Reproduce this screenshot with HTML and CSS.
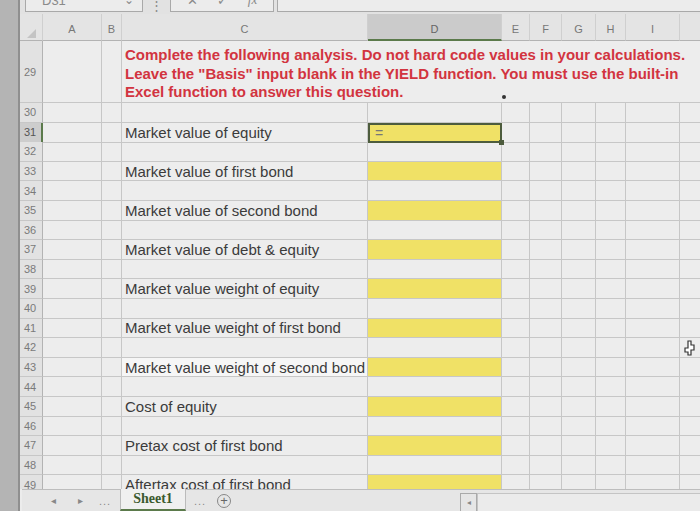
FILE: index.html
```html
<!DOCTYPE html>
<html lang="en">
<head>
    <meta charset="UTF-8">
    <meta name="viewport" content="width=device-width, initial-scale=1.0">
    <title>Sheet1</title>
    <link rel="stylesheet" href="styles.css">
</head>
<body>
    <div class="screen">
        <div class="edge"></div>
        <div class="app">
            <div class="formula-bar">
                <div class="name-box">D31<span class="caret">&#8964;</span></div>
                <span class="more">&#8942;</span>
                <div class="fx-box"><span>&#10005;</span><span>&#10003;</span><span class="fx">fx</span></div>
                <div class="formula-input"></div>
            </div>

            <div class="sheet" id="sheet">
                <div class="row col-heads">
                    <div class="cell head corner"><span class="tri"></span></div>
                    <div class="cell col">A</div>
                    <div class="cell col">B</div>
                    <div class="cell col">C</div>
                    <div class="cell col active">D</div>
                    <div class="cell col">E</div>
                    <div class="cell col">F</div>
                    <div class="cell col">G</div>
                    <div class="cell col">H</div>
                    <div class="cell col">I</div>
                    <div class="cell col"></div>
                </div>
                <div class="row tall">
                    <div class="cell head">29</div>
                    <div class="cell"></div>
                    <div class="cell"></div>
                    <div class="cell note">
                        Complete the following analysis. Do not hard code values in your calculations.<br>
                        Leave the "Basis" input blank in the YIELD function. You must use the built-in<br>
                        Excel function to answer this question.
                        <span class="dot"></span>
                    </div>
                </div>
            </div>

            <div class="tabs">
                <span class="nav">&#9666;</span>
                <span class="nav">&#9656;</span>
                <span class="ellipsis">...</span>
                <div class="tab">Sheet1</div>
                <span class="ellipsis">...</span>
                <span class="add">+</span>
                <div class="scroll">
                    <span class="scroll-btn">&#9666;</span>
                    <div class="track"></div>
                </div>
            </div>
        </div>

        <svg class="cursor" width="12" height="16" viewBox="0 0 12 16">
            <path d="M5 1h3v4h3v5h-3v5h-3v-3h-3v-4h3z" fill="#fff" stroke="#333" stroke-width="1.2"/>
        </svg>
    </div>

    <script>
        const items = {
            31: 'Market value of equity',
            33: 'Market value of first bond',
            35: 'Market value of second bond',
            37: 'Market value of debt & equity',
            39: 'Market value weight of equity',
            41: 'Market value weight of first bond',
            43: 'Market value weight of second bond',
            45: 'Cost of equity',
            47: 'Pretax cost of first bond',
            49: 'Aftertax cost of first bond'
        };

        const sheet = document.getElementById('sheet');

        for (let r = 30; r <= 49; r++) {
            const row = document.createElement('div');
            row.className = 'row';

            const label = items[r] || '';
            const cells = [
                { cls: 'head' + (r === 31 ? ' current' : ''), text: r },
                {}, {},
                { cls: 'label' + (r === 43 ? ' plain' : ''), text: label },
                { cls: label ? 'input' + (r === 31 ? ' selected' : '') : '', text: r === 31 ? '=' : '' },
                {}, {}, {}, {}, {}, {}
            ];

            cells.forEach(c => {
                const cell = document.createElement('div');
                cell.className = 'cell ' + (c.cls || '');
                cell.textContent = c.text || '';
                row.appendChild(cell);
            });

            sheet.appendChild(row);
        }
    </script>
</body>
</html>
```

FILE: styles.css
```css
body {
    margin: 0;
    font-family: "Liberation Sans", Arial, sans-serif;
    background: #ececec;
}

.screen {
    position: relative;
    display: flex;
    width: 700px;
    height: 511px;
    overflow: hidden;
    background: #ececec;
}

.edge {
    flex: none;
    width: 18px;
    background: #b4b4b4;
    border-right: 2px solid #8f8f8f;
}

.app {
    flex: 1;
    min-width: 0;
    display: flex;
    flex-direction: column;
}

/* formula bar, only its lower edge is in view */
.formula-bar {
    flex: none;
    height: 14px;
    display: flex;
    align-items: flex-end;
    overflow: hidden;
    background: #e2e2e2;
    color: #8a8a8a;
    font-size: 13px;
}

.name-box,
.fx-box,
.formula-input {
    height: 24px;
    margin-bottom: 2px;
    border: 1px solid #a9a9a9;
    background: #ececec;
    box-sizing: border-box;
    display: flex;
    align-items: center;
}

.name-box {
    width: 118px;
    margin-left: 5px;
    padding: 0 8px 0 16px;
    justify-content: space-between;
}

.caret {
    font-size: 12px;
}

.more {
    width: 27px;
    text-align: center;
    margin-bottom: 1px;
}

.fx-box {
    width: 104px;
    justify-content: space-around;
    padding: 0 6px;
}

.fx {
    font-style: italic;
    font-family: "Liberation Serif", serif;
}

.formula-input {
    flex: 1;
    margin-left: 3px;
    border-right: none;
}

/* grid */
.sheet {
    flex: 1;
    overflow: hidden;
    background: #ededed;
}

.row {
    display: grid;
    grid-template-columns: 23px 59px 20px 246px 134px 28px 32px 34px 30px 54px 40px;
    height: 19.6px;
}

.cell {
    border-right: 1px solid #c7c7c7;
    border-bottom: 1px solid #c7c7c7;
    box-sizing: border-box;
    white-space: nowrap;
    min-width: 0;
}

.head {
    background: #e2e2e2;
    border-right-color: #b3b3b3;
    color: #7a7a7a;
    font-size: 11px;
    padding-left: 4px;
    display: flex;
    align-items: center;
}

.head.current {
    background: #cdcdcd;
    color: #555;
    border-right: 2px solid #5b7a4b;
}

.col-heads {
    height: 27px;
}

.col-heads .cell {
    background: #e4e4e4;
    border-bottom-color: #b3b3b3;
    border-right-color: #cfcfcf;
    color: #777;
    font-size: 11px;
    display: flex;
    align-items: center;
    justify-content: center;
    padding-top: 4px;
}

.col-heads .col.active {
    background: #cbcbcb;
    border-bottom: 2px solid #5b7a4b;
    color: #666;
}

.corner {
    justify-content: flex-end;
}

.tri {
    width: 0;
    height: 0;
    margin: 8px 3px 0 0;
    border-left: 9px solid transparent;
    border-bottom: 9px solid #c4c4c4;
}

.tall {
    height: 62px;
}

.note {
    position: relative;
    grid-column: span 8;
    border-right: none;
    padding: 5px 0 0 3px;
    color: #d2343f;
    font-weight: bold;
    font-size: 15px;
    line-height: 18.6px;
}

.dot {
    position: absolute;
    left: 380px;
    top: 54px;
    width: 4px;
    height: 4px;
    border-radius: 50%;
    background: #333;
}

.label {
    color: #3b3b3b;
    font-size: 15px;
    padding-left: 3px;
    display: flex;
    align-items: center;
}

.label.plain {
    background: #f6f6f6;
}

.input {
    background: #f0e166;
    color: #777;
    font-size: 14px;
    padding-left: 5px;
    display: flex;
    align-items: center;
}

.input.selected {
    position: relative;
    border: 2px solid #4d5c3d;
}

.input.selected::after {
    content: "";
    position: absolute;
    right: -4px;
    bottom: -4px;
    width: 5px;
    height: 5px;
    background: #4d5c3d;
}

/* sheet tabs */
.tabs {
    flex: none;
    height: 22px;
    display: flex;
    align-items: stretch;
    background: #e6e6e6;
    border-top: 1px solid #bdbdbd;
    box-sizing: border-box;
    margin-left: 2px;
    color: #888;
    font-size: 10px;
}

.nav {
    width: 27px;
    display: flex;
    align-items: center;
    justify-content: center;
}

.nav:first-child {
    margin-left: 18px;
}

.ellipsis {
    width: 22px;
    display: flex;
    align-items: center;
    justify-content: center;
    font-size: 11px;
    letter-spacing: 1px;
}

.nav + .ellipsis {
    margin-right: 4px;
}

.tab {
    width: 66px;
    margin-top: -1px;
    background: #f0f0f0;
    border-left: 1px solid #bbb;
    border-right: 1px solid #bbb;
    border-bottom: 2px solid #5b7a4b;
    box-sizing: border-box;
    display: flex;
    align-items: center;
    justify-content: center;
    font-family: "Liberation Serif", serif;
    font-weight: bold;
    font-size: 14px;
    color: #3b5a2e;
}

.tab + .ellipsis {
    margin-left: 3px;
}

.add {
    width: 14px;
    height: 14px;
    margin: auto 0 auto 6px;
    border: 1px solid #888;
    border-radius: 50%;
    box-sizing: border-box;
    display: flex;
    align-items: center;
    justify-content: center;
    font-size: 13px;
    color: #666;
}

.scroll {
    margin-left: auto;
    width: 240px;
    display: flex;
    align-items: stretch;
    padding-top: 3px;
}

.scroll-btn {
    width: 15px;
    border: 1px solid #aaa;
    border-bottom: none;
    display: flex;
    align-items: center;
    justify-content: center;
    font-size: 8px;
}

.track {
    flex: 1;
    border: 1px solid #c4c4c4;
    border-bottom: none;
    border-right: none;
    background: #ebebeb;
}

.cursor {
    position: absolute;
    left: 683px;
    top: 340px;
}
```
